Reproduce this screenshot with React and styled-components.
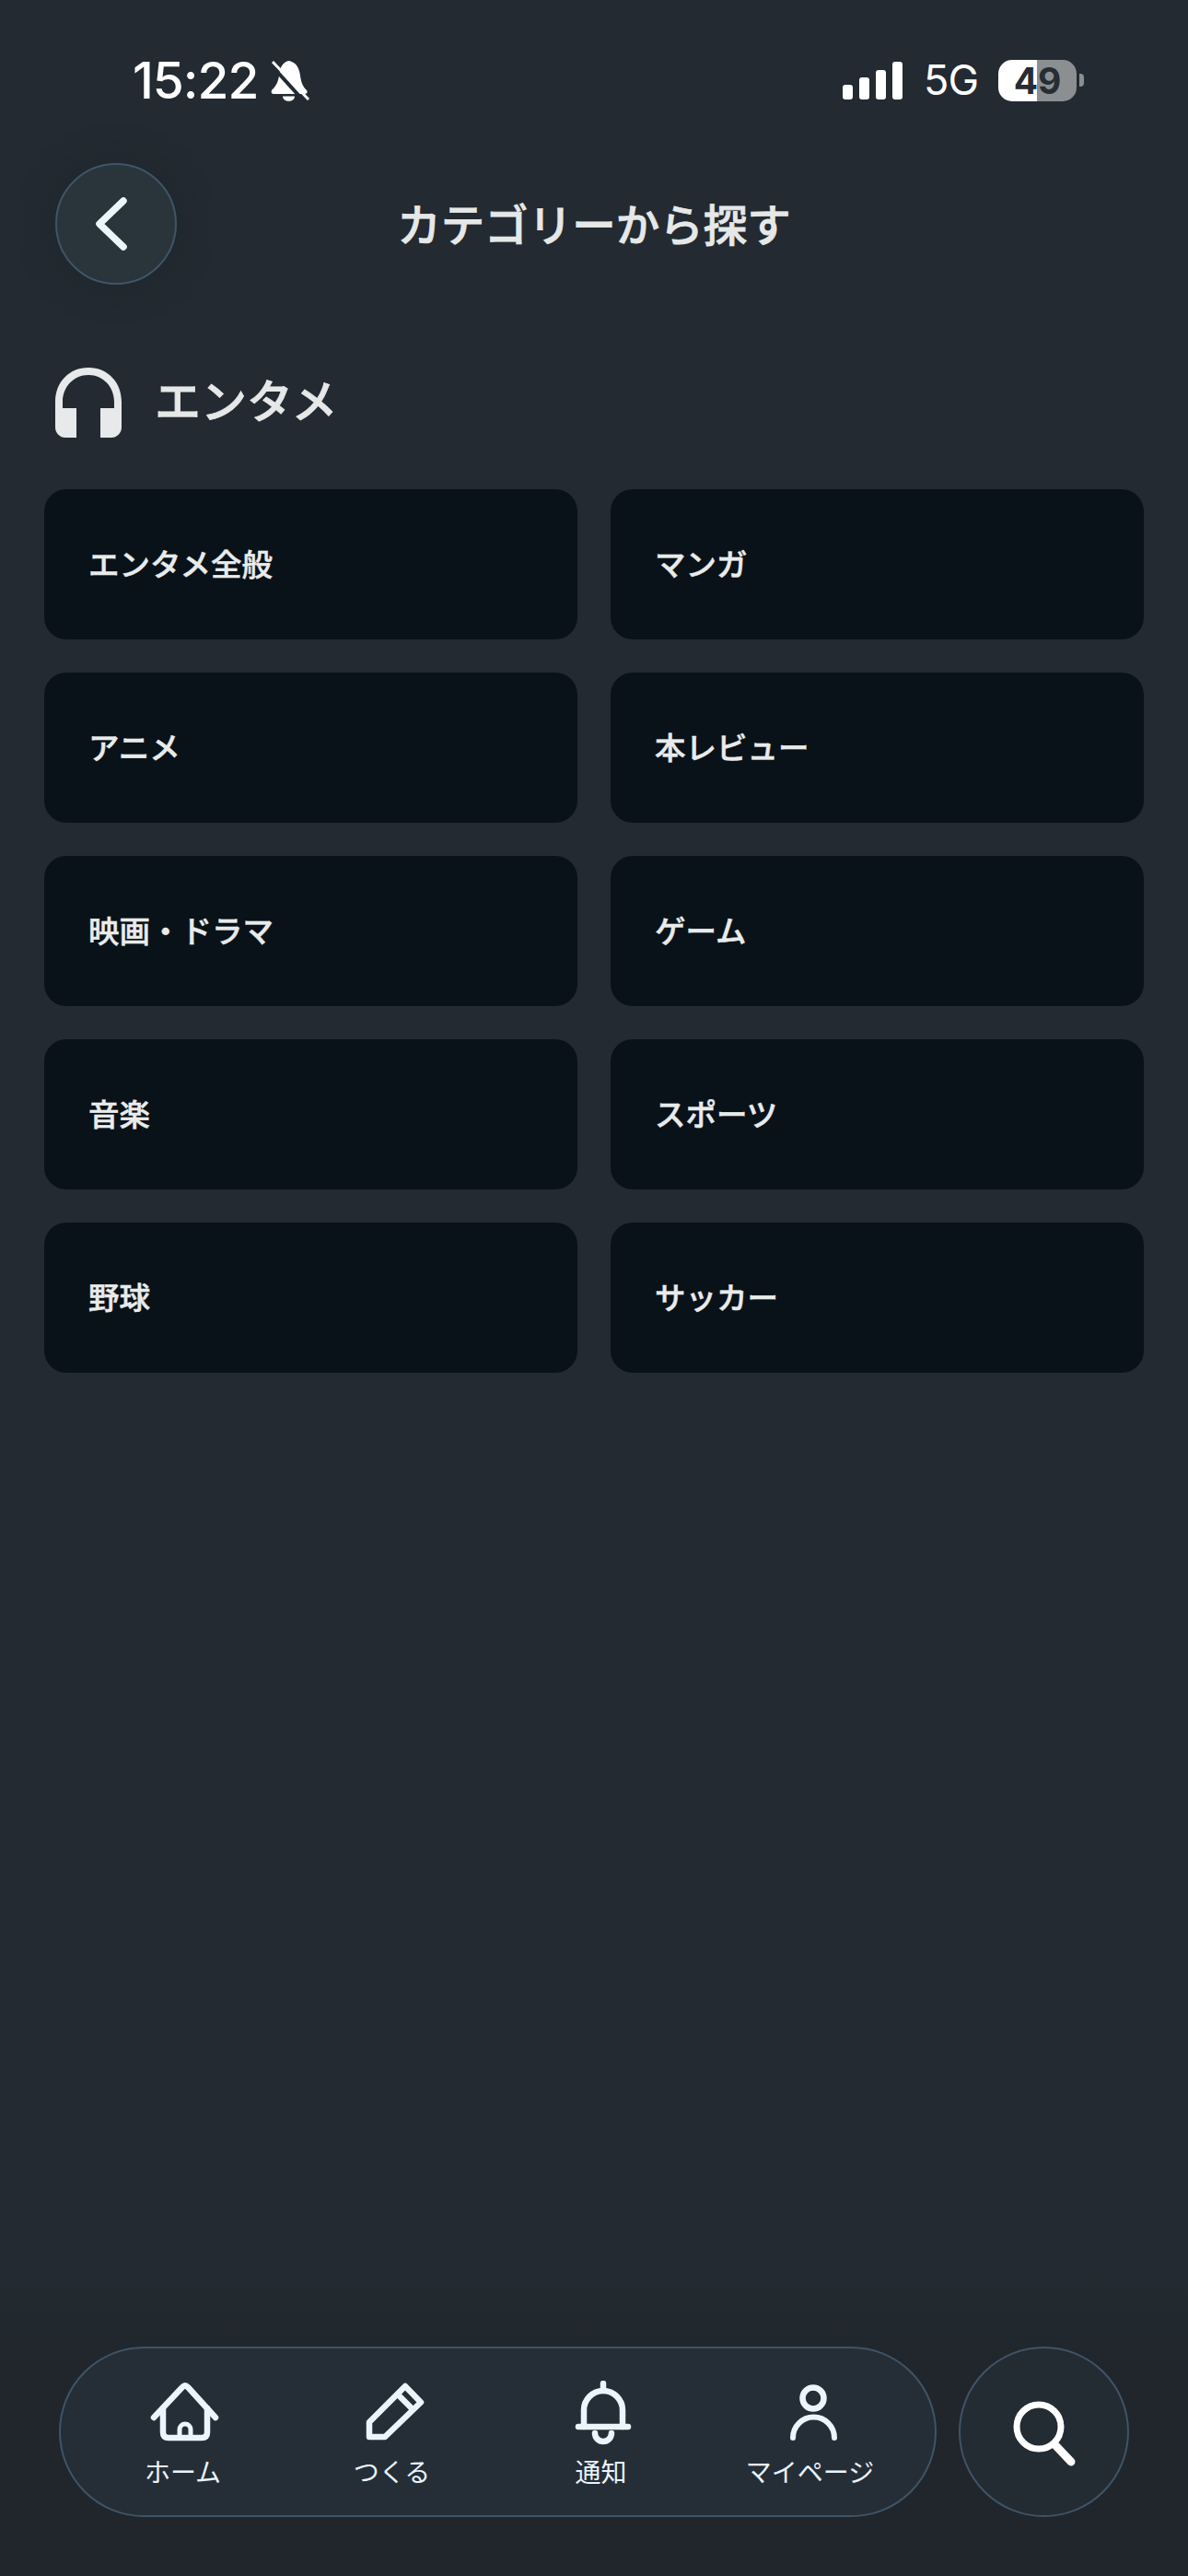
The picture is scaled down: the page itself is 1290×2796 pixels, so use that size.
import React from "react";
import styled, { createGlobalStyle } from "styled-components";

const JP = `"Noto Sans CJK JP", "Noto Sans", sans-serif`;

const Global = createGlobalStyle`
  html, body { margin: 0; padding: 0; background: #232a31; }
  * { box-sizing: border-box; }
`;

const Page = styled.div`
  width: 1290px;
  height: 2796px;
  display: flex;
  flex-direction: column;
  background: linear-gradient(180deg, #232a31 0%, #232a31 88%, #20262c 92%, #20262c 100%);
  font-family: ${JP};
  overflow: hidden;
`;

const StatusBar = styled.div`
  height: 174px;
  display: flex;
  align-items: center;
  justify-content: space-between;
  padding: 0 113px 0 144px;
  color: #fff;
  font-family: Inter, Roboto, sans-serif;
`;
const StatusGroup = styled.div`
  display: flex;
  align-items: center;
`;
const Time = styled.span`
  font-size: 55px;
  font-weight: 500;
  letter-spacing: -1px;
  line-height: 60px;
  margin-right: 13px;
`;
const Network = styled.span`
  font-family: Inter, Roboto, sans-serif;
  font-size: 45px;
  font-weight: 400;
  line-height: 50px;
  margin: 0 22px 0 23px;
  letter-spacing: -1px;
`;
const Battery = styled.div`
  width: 85px;
  height: 45px;
  border-radius: 15px;
  background: linear-gradient(90deg, #fff 0 49%, #8b8f92 49% 100%);
  color: #262d33;
  font-size: 39px;
  font-weight: 700;
  line-height: 45px;
  text-align: center;
  font-family: Inter, Roboto, sans-serif;
`;
const BatteryCap = styled.div`
  width: 5px;
  height: 14px;
  margin-left: 3px;
  border-radius: 0 4px 4px 0;
  background: #8b8f92;
`;

const Header = styled.div`
  display: grid;
  grid-template-columns: 132px 1fr 132px;
  align-items: center;
  padding: 0 60px;
  margin-top: 3px;
`;
const BackButton = styled.button`
  width: 132px;
  height: 132px;
  border-radius: 50%;
  border: 2px solid #3f5568;
  background: #29343b;
  box-shadow: 0 0 36px rgba(30, 38, 44, 0.8);
  display: flex;
  align-items: center;
  justify-content: center;
  padding: 0 8px 0 0;
`;
const Title = styled.h1`
  margin: 0;
  padding-bottom: 3px;
  text-align: center;
  color: #e6e8e8;
  font-size: 47.5px;
  font-weight: 500;
  -webkit-text-stroke: 0.8px #e6e8e8;
  line-height: 64px;
`;

const SectionHead = styled.div`
  display: flex;
  align-items: center;
  gap: 36px;
  padding: 0 60px;
  margin-top: 90px;
`;
const SectionTitle = styled.h2`
  margin: 0;
  padding-bottom: 10px;
  color: #e6e8e8;
  font-size: 50px;
  font-weight: 500;
  -webkit-text-stroke: 0.8px #e6e8e8;
  line-height: 66px;
`;

const Grid = styled.div`
  display: grid;
  grid-template-columns: 579px 579px;
  grid-auto-rows: 163px;
  gap: 36px;
  padding: 0 48px;
  margin-top: 56px;
`;
const Card = styled.div`
  background: #0a1219;
  border-radius: 24px;
  display: flex;
  align-items: center;
  padding: 0 0 4px 48px;
  color: #e9ebeb;
  font-size: 33.5px;
  font-weight: 500;
  -webkit-text-stroke: 0.5px #e9ebeb;
`;

const BottomBar = styled.div`
  margin-top: auto;
  display: flex;
  gap: 24px;
  padding: 0 64px 64px;
`;
const NavPill = styled.nav`
  width: 953px;
  height: 185px;
  border-radius: 93px;
  border: 2.5px solid #3f5467;
  background: #252e37;
  display: grid;
  grid-template-columns: repeat(4, 227px);
  padding: 35px 0 0 21px;
`;
const NavItem = styled.div`
  display: flex;
  flex-direction: column;
  align-items: center;
  gap: 8px;
`;
const NavLabel = styled.span`
  color: #eaf4fc;
  font-size: 28px;
  line-height: 36px;
  font-weight: 400;
  margin-right: 4px;
`;
const SearchButton = styled.button`
  width: 185px;
  height: 185px;
  border-radius: 50%;
  border: 2.5px solid #3f5467;
  background: #232b33;
  display: flex;
  align-items: center;
  justify-content: center;
  padding: 0;
`;

const Stroke = { fill: "none", stroke: "#eaf5fe", strokeLinecap: "round", strokeLinejoin: "round" };

const BellSlash = () => (
  <svg width="44" height="46" viewBox="0 0 44 46">
    <path fill="#fff" d="M21 2C14 3 11 9 10 18 9 26 6 30 2 34c-1 2 0 4 2 4h34c3 0 3-3 2-4-4-4-6-8-7-16C32 10 29 4 21 2Z" />
    <path fill="#fff" d="M14 40.500h13c0 7-13 7-13 0Z" />
    <path d="M0 5 39 48" stroke="#232a31" strokeWidth="4" />
    <path d="M3 3 42 44" stroke="#fff" strokeWidth="3" />
  </svg>
);
const Signal = () => (
  <svg width="65" height="41" viewBox="0 0 65 41">
    <rect x="0" y="25" width="11" height="16" rx="3" fill="#fff" />
    <rect x="18" y="17" width="11" height="24" rx="3" fill="#fff" />
    <rect x="36" y="9" width="11" height="32" rx="3" fill="#fff" />
    <rect x="54" y="0" width="11" height="41" rx="3" fill="#fff" />
  </svg>
);
const Chevron = () => (
  <svg width="36" height="60" viewBox="0 0 36 60">
    <path d="M30 5 4 30l26 25" fill="none" stroke="#eaf6fe" strokeWidth="7.500" strokeLinecap="round" strokeLinejoin="round" />
  </svg>
);
const Headphones = () => (
  <svg width="72" height="76" viewBox="0 0 72 76">
    <path fill="#e7e9ea" d="M36 0C15 0 0 16 0 37v28c0 6 5 11 11 11h12V44H8v-7C8 21 20 8 36 8s28 13 28 29v7H49v32h12c6 0 11-5 11-11V37C72 16 57 0 36 0Z" />
  </svg>
);
const IconBox = ({ children, size = 84, h = 72, sw = 6.5 }) => (
  <svg width={size} height={h} viewBox={`0 0 ${size} ${h}`} strokeWidth={sw} {...Stroke}>{children}</svg>
);

const navItems = [
  { label: "ホーム", icon: <><path d="M8 40 39 7 Q42 4 45 7L75 40" /><path d="M18 30V56q0 6 6 6h36q6 0 6-6V30" /><path d="M36 62V53a6 6 0 0 1 12 0v9" strokeWidth="5" /></> },
  { label: "つくる", icon: <><path d="M15 61V45L54 6 71 23.500 32 61Z" /><path d="M46 15 62 31" /></> },
  { label: "通知", icon: <><path d="M15 50H69" /><path d="M21 50V32a21 21 0 0 1 42 0V50" /><path d="M42 3V9" /><path d="M33 57a9 9 0 0 0 18 0" /></> },
  { label: "マイページ", icon: <><circle cx="43" cy="19" r="11.500" /><path d="M21 62a22.500 22.500 0 0 1 45 0" strokeWidth="6" /></> },
];

const categories = ["エンタメ全般", "マンガ", "アニメ", "本レビュー", "映画・ドラマ", "ゲーム", "音楽", "スポーツ", "野球", "サッカー"];

export default function App() {
  return (
    <Page>
      <Global />
      <StatusBar>
        <StatusGroup>
          <Time>15:22</Time>
          <BellSlash />
        </StatusGroup>
        <StatusGroup>
          <Signal />
          <Network>5G</Network>
          <Battery>49</Battery>
          <BatteryCap />
        </StatusGroup>
      </StatusBar>
      <Header>
        <BackButton aria-label="戻る"><Chevron /></BackButton>
        <Title>カテゴリーから探す</Title>
      </Header>
      <SectionHead>
        <Headphones />
        <SectionTitle>エンタメ</SectionTitle>
      </SectionHead>
      <Grid>
        {categories.map((c) => <Card key={c}>{c}</Card>)}
      </Grid>
      <BottomBar>
        <NavPill>
          {navItems.map((n) => (
            <NavItem key={n.label}>
              <IconBox>{n.icon}</IconBox>
              <NavLabel>{n.label}</NavLabel>
            </NavItem>
          ))}
        </NavPill>
        <SearchButton aria-label="検索">
          <svg width="84" height="84" viewBox="0 0 84 84" {...Stroke} stroke="#fff">
            <circle cx="36" cy="36" r="24" strokeWidth="7" />
            <path d="M53 55 71 74" strokeWidth="9" />
          </svg>
        </SearchButton>
      </BottomBar>
    </Page>
  );
}
